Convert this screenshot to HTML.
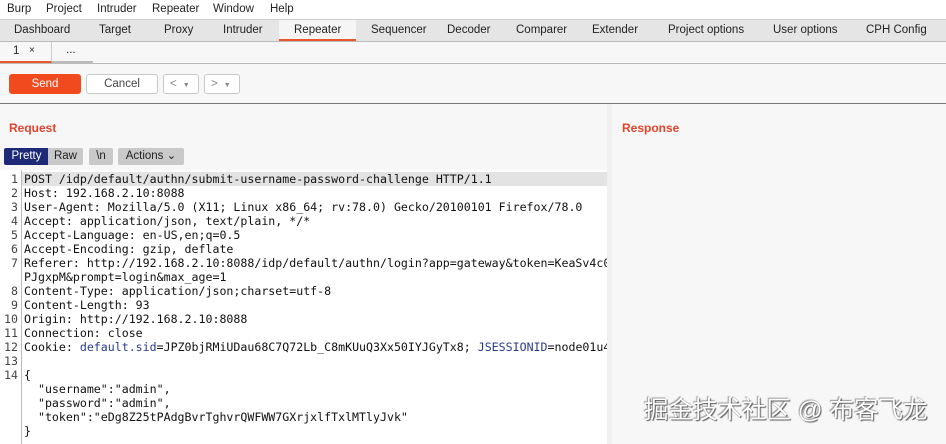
<!DOCTYPE html>
<html><head><meta charset="utf-8"><style>
*{margin:0;padding:0;box-sizing:border-box}
body{width:946px;height:444px;overflow:hidden;background:#f7f7f7;font-family:"Liberation Sans",sans-serif;font-size:11.5px;color:#222;position:relative}
.a{position:absolute}
.menu span{position:absolute;top:3px}
.tabs{top:19px;left:0;width:946px;height:23px;background:#e5e5e5;border-top:1px solid #ccc;border-bottom:1px solid #bbb}
.tabs span{position:absolute;top:4px}
.btn{position:absolute;height:20px;border:1px solid #c8c8c8;border-radius:3px;background:#fff;text-align:center;line-height:18px;color:#444}
.code{font-family:"DejaVu Sans Mono","Liberation Mono",monospace;font-size:11.6px;line-height:14px;white-space:pre;color:#111}
.ln{position:absolute;left:0;width:18px;text-align:right;color:#444}
.sb{position:absolute;top:148px;height:17px;line-height:17px;background:#c9c9c9;border-radius:2px;color:#222;text-align:center}
</style></head><body>
<div class="a" style="left:0;top:0;width:946px;height:19px;background:#fff"></div>
<div class="menu">
<span style="left:7px">Burp</span><span style="left:46px">Project</span><span style="left:97px">Intruder</span><span style="left:152px">Repeater</span><span style="left:213px">Window</span><span style="left:270px">Help</span>
</div>
<div class="a tabs">
<div class="a" style="left:279px;top:0;width:77px;height:21px;background:#f5f5f5;border-bottom:2px solid #e8562a"></div>
<span style="left:14px">Dashboard</span><span style="left:99px">Target</span><span style="left:164px">Proxy</span><span style="left:223px">Intruder</span><span style="left:294px">Repeater</span><span style="left:371px">Sequencer</span><span style="left:447px">Decoder</span><span style="left:516px">Comparer</span><span style="left:592px">Extender</span><span style="left:668px">Project options</span><span style="left:773px">User options</span><span style="left:866px">CPH Config</span>
</div>
<div class="a" style="left:0;top:42px;width:52px;height:21px;border-bottom:2px solid #e8562a;border-right:1px solid #ccc"><span class="a" style="left:13px;top:3px">1</span><span class="a" style="left:29px;top:3px;font-size:10px">×</span></div>
<div class="a" style="left:52px;top:42px;width:41px;height:21px;border-bottom:2px solid #bbb"><span class="a" style="left:14px;top:2px">...</span></div>
<div class="a" style="left:0;top:63px;width:946px;height:1px;background:#bbb"></div>
<div class="btn" style="left:9px;top:74px;width:72px;background:#f04a1e;border-color:#f04a1e;color:#fff">Send</div>
<div class="btn" style="left:86px;top:74px;width:72px">Cancel</div>
<div class="btn" style="left:163px;top:74px;width:36px;color:#888;text-align:left;padding-left:6px">&lt;<span style="font-size:7px;margin-left:6px">▼</span></div>
<div class="btn" style="left:204px;top:74px;width:36px;color:#888;text-align:left;padding-left:6px">&gt;<span style="font-size:7px;margin-left:6px">▼</span></div>
<div class="a" style="left:0;top:103px;width:946px;height:1px;background:#777"></div>
<div class="a" style="left:9px;top:121px;color:#e2442b;font-weight:bold;font-size:12px">Request</div>
<div class="a" style="left:622px;top:121px;color:#e2442b;font-weight:bold;font-size:12px">Response</div>
<div class="sb" style="left:4px;background:#1e2a78;color:#fff;border-radius:2px 0 0 2px;width:45px">Pretty</div>
<div class="sb" style="left:48px;width:35px;border-radius:0 2px 2px 0">Raw</div>
<div class="sb" style="left:89px;width:24px">\n</div>
<div class="sb" style="left:118px;width:66px">Actions ⌄</div>
<div class="a" style="left:0;top:170px;width:607px;height:274px;background:#fff"></div>
<div class="a" style="left:607px;top:104px;width:5px;height:340px;background:#f0f0f0"></div>
<div class="a" style="left:21px;top:170px;width:1px;height:274px;background:#bbb"></div>
<div class="a" style="left:22px;top:172px;width:585px;height:14px;background:#e3e3e3"></div>
<div class="a code" style="left:0;top:172px;width:607px;height:272px;overflow:hidden">
<div class="ln" style="top:0">1
2
3
4
5
6
7

8
9
10
11
12
13
14</div><div class="a" style="left:24px;top:0">POST /idp/default/authn/submit-username-password-challenge HTTP/1.1
Host: 192.168.2.10:8088
User-Agent: Mozilla/5.0 (X11; Linux x86_64; rv:78.0) Gecko/20100101 Firefox/78.0
Accept: application/json, text/plain, */*
Accept-Language: en-US,en;q=0.5
Accept-Encoding: gzip, deflate
Referer: http://192.168.2.10:8088/idp/default/authn/login?app=gateway&amp;token=KeaSv4c0
PJgxpM&amp;prompt=login&amp;max_age=1
Content-Type: application/json;charset=utf-8
Content-Length: 93
Origin: http://192.168.2.10:8088
Connection: close
Cookie: <span style="color:#2a3a8a">default.sid</span>=JPZ0bjRMiUDau68C7Q72Lb_C8mKUuQ3Xx50IYJGyTx8; <span style="color:#2a3a8a">JSESSIONID</span>=node01u4

{
  "username":"admin",
  "password":"admin",
  "token":"eDg8Z25tPAdgBvrTghvrQWFWW7GXrjxlfTxlMTlyJvk"
}</div></div>
<div class="a" style="left:644px;top:396px;font-family:'Liberation Sans','Noto Sans CJK SC',sans-serif;font-size:24.5px;line-height:30px;color:#fff;text-shadow:1px 1px 1px #555,-1px -1px 1px #999;white-space:nowrap">掘金技术社区 @ 布客飞龙</div>
</body></html>
